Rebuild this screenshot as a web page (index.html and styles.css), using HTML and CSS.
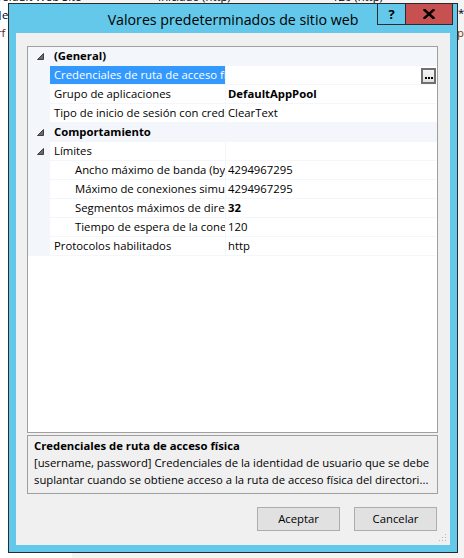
FILE: index.html
```html
<!DOCTYPE html>
<html lang="es">
<head>
<meta charset="utf-8">
<title>Valores predeterminados de sitio web</title>
<link rel="stylesheet" href="styles.css">
</head>
<body>
<div class="bgwin">
  <div class="bg-shade"></div>
  <span class="bgt t1">Default Web Site</span>
  <span class="bgt t2">Iniciado (http)</span>
  <span class="bgt t3">120 (http)</span>
  <span class="bgt t4"><i class="selbar"></i>e</span>
  <span class="bgt t5">rf</span>
  <span class="bgt t6">*:</span>
  <span class="bgt t7">p)</span>
</div>

<div class="dialog">
  <div class="titlebar">
    <div class="title">Valores predeterminados de sitio web</div>
    <div class="caption">
      <div class="cbtn help">?</div>
      <div class="cbtn close">
        <svg width="12" height="10" viewBox="0 0 12 10"><path d="M1.5 1 L10.5 9 M10.5 1 L1.5 9" stroke="#000" stroke-width="2.4" stroke-linecap="square" fill="none"/></svg>
      </div>
    </div>
  </div>

  <div class="client">
    <div class="grid">
      <div class="row cat">
        <div class="gutter"><svg class="exp" width="7" height="7" viewBox="0 0 7 7"><path d="M6.5 0.5 L6.5 6.5 L0.5 6.5 Z" fill="#6a6a6a" stroke="#404040" stroke-width="1"/></svg></div>
        <div class="catname">(General)</div>
      </div>
      <div class="row">
        <div class="gutter"></div>
        <div class="name sel">Credenciales de ruta de acceso física</div>
        <div class="div"></div>
        <div class="value">
          <span class="ell"><svg width="8" height="2" viewBox="0 0 8 2"><rect x="0" y="0" width="2" height="2" fill="#000"/><rect x="3" y="0" width="2" height="2" fill="#000"/><rect x="6" y="0" width="2" height="2" fill="#000"/></svg></span>
        </div>
      </div>
      <div class="row">
        <div class="gutter"></div>
        <div class="name">Grupo de aplicaciones</div>
        <div class="div"></div>
        <div class="value b">DefaultAppPool</div>
      </div>
      <div class="row">
        <div class="gutter"></div>
        <div class="name">Tipo de inicio de sesión con credenciales físicas</div>
        <div class="div"></div>
        <div class="value">ClearText</div>
      </div>
      <div class="row cat">
        <div class="gutter"><svg class="exp" width="7" height="7" viewBox="0 0 7 7"><path d="M6.5 0.5 L6.5 6.5 L0.5 6.5 Z" fill="#6a6a6a" stroke="#404040" stroke-width="1"/></svg></div>
        <div class="catname">Comportamiento</div>
      </div>
      <div class="row">
        <div class="gutter"><svg class="exp" width="7" height="7" viewBox="0 0 7 7"><path d="M6.5 0.5 L6.5 6.5 L0.5 6.5 Z" fill="#6a6a6a" stroke="#404040" stroke-width="1"/></svg></div>
        <div class="name">Límites</div>
        <div class="div"></div>
        <div class="value"></div>
      </div>
      <div class="row">
        <div class="gutter"></div>
        <div class="name l2">Ancho máximo de banda (bytes/segundo)</div>
        <div class="div"></div>
        <div class="value">4294967295</div>
      </div>
      <div class="row">
        <div class="gutter"></div>
        <div class="name l2">Máximo de conexiones simultáneas</div>
        <div class="div"></div>
        <div class="value">4294967295</div>
      </div>
      <div class="row">
        <div class="gutter"></div>
        <div class="name l2">Segmentos máximos de dirección URL</div>
        <div class="div"></div>
        <div class="value b">32</div>
      </div>
      <div class="row">
        <div class="gutter"></div>
        <div class="name l2">Tiempo de espera de la conexión (segundos)</div>
        <div class="div"></div>
        <div class="value">120</div>
      </div>
      <div class="row">
        <div class="gutter"></div>
        <div class="name">Protocolos habilitados</div>
        <div class="div"></div>
        <div class="value">http</div>
      </div>
      <div class="filler"></div>
    </div>

    <div class="desc">
      <div class="desc-title">Credenciales de ruta de acceso física</div>
      <div class="desc-line">[username, password] Credenciales de la identidad de usuario que se debe</div>
      <div class="desc-line">suplantar cuando se obtiene acceso a la ruta de acceso física del directori...</div>
    </div>

    <div class="buttons">
      <div class="btn">Aceptar</div>
      <div class="btn">Cancelar</div>
    </div>

    <svg class="grip" width="8" height="8" viewBox="0 0 8 8">
      <rect x="6" y="0" width="1" height="1" fill="#b5b5b5"/>
      <rect x="3" y="3" width="1" height="1" fill="#b5b5b5"/>
      <rect x="6" y="3" width="1" height="1" fill="#b5b5b5"/>
      <rect x="0" y="6" width="1" height="1" fill="#b5b5b5"/>
      <rect x="3" y="6" width="1" height="1" fill="#b5b5b5"/>
      <rect x="6" y="6" width="1" height="1" fill="#b5b5b5"/>
    </svg>
  </div>
</div>
</body>
</html>
```
FILE: styles.css
```css
* { box-sizing: border-box; }
html, body { margin: 0; padding: 0; }
body {
  width: 464px;
  height: 558px;
  overflow: hidden;
  position: relative;
  background: #fff;
  font-family: "Open Sans", "Noto Sans", sans-serif;
  font-size: 11.3px;
  color: #000;
}

/* background window */
.bgwin { position: absolute; inset: 0; background: #fff; }
.bg-shade { position: absolute; left: 72px; top: 0; right: 0; bottom: 0; background: #f4f4f4; }
.bgt { position: absolute; white-space: nowrap; font-size: 11.3px; line-height: 14px; }
.t1 { left: -6px; top: -10px; }
.t2 { left: 158px; top: -10px; }
.t3 { left: 332px; top: -10px; }
.t4 { left: 0; top: 8px; padding-left: 2px; }
.selbar { position: absolute; left: 0; top: 3px; width: 1px; height: 9px; background: #3c8fd8; }
.t5 { left: -3px; top: 26px; color: #6b1a1a; }
.t6 { left: 458px; top: 6px; }
.t7 { left: 457px; top: 26px; color: #7a3a00; }

/* dialog */
.dialog {
  position: absolute;
  left: 8px;
  top: 3px;
  width: 450px;
  height: 550px;
  border: 1px solid #2b2b2b;
  background: #64c8ea;
  display: flex;
  flex-direction: column;
  padding: 0 7px 7px 7px;
}
.titlebar {
  height: 29px;
  flex: none;
  margin: 0 -7px;
  position: relative;
  display: flex;
  align-items: center;
  justify-content: center;
}
.title { font-size: 14.2px; color: #000; padding-top: 1px; }
.caption {
  position: absolute;
  top: 0;
  right: 4px;
  display: flex;
  height: 21px;
}
.cbtn {
  height: 21px;
  border: 1px solid #2b2b2b;
  border-top: none;
  display: flex;
  align-items: center;
  justify-content: center;
}
.help { width: 28px; border-right: none; font-weight: bold; font-size: 13px; padding-bottom: 1px; }
.close { width: 48px; background: #c75050; }

.client {
  flex: 1;
  position: relative;
  background: #f0f0f0;
  display: flex;
  flex-direction: column;
  padding: 13px 12px 13px 11px;
}

/* property grid */
.grid {
  height: 387px;
  flex: none;
  border: 1px solid #a0a0a0;
  background: #fff;
  display: flex;
  flex-direction: column;
}
.row { display: flex; height: 19px; flex: none; }
.gutter {
  width: 22px;
  flex: none;
  background: #f3f6fb;
  display: flex;
  align-items: center;
}
.exp { margin-left: 9px; margin-top: -1px; }
.cat { background: #f3f6fb; }
.catname { font-weight: bold; padding-left: 4px; line-height: 18px; white-space: nowrap; }
.name {
  width: 175px;
  flex: none;
  padding-left: 4px;
  line-height: 18px;
  border-bottom: 1px solid #f3f6fb;
  white-space: nowrap;
  overflow: hidden;
}
.name.l2 { padding-left: 25px; }
.name.sel { background: #3399ff; color: #fff; background-clip: content-box; padding-left: 0; text-indent: 4px; }
.div { width: 1px; flex: none; background: #f3f6fb; }
.value {
  flex: 1;
  position: relative;
  padding-left: 2px;
  line-height: 18px;
  border-bottom: 1px solid #f3f6fb;
  white-space: nowrap;
  overflow: hidden;
}
.b { font-weight: bold; }
.ell {
  position: absolute;
  right: 1px;
  top: 2px;
  width: 15px;
  height: 16px;
  border: 2px solid #707070;
  background: linear-gradient(#f4f4f4, #e2e2e2);
  display: flex;
  align-items: flex-end;
  justify-content: center;
  padding-bottom: 3px;
}
.ell svg { display: block; }
.filler { flex: 1; }

/* description */
.desc {
  margin-top: 2px;
  height: 59px;
  flex: none;
  border: 1px solid #a0a0a0;
  padding: 1px 6px 0 6px;
  line-height: 17px;
}
.desc-title { font-weight: bold; white-space: nowrap; }
.desc-line { white-space: nowrap; overflow: hidden; }

/* buttons */
.buttons {
  margin-top: 13px;
  display: flex;
  justify-content: flex-end;
  gap: 14px;
  padding-right: 1px;
}
.btn {
  width: 83px;
  height: 24px;
  border: 1px solid #adadad;
  background: #e1e1e1;
  display: flex;
  align-items: center;
  justify-content: center;
  padding-bottom: 1px;
}
.grip { position: absolute; right: 3px; bottom: 3px; }
```
